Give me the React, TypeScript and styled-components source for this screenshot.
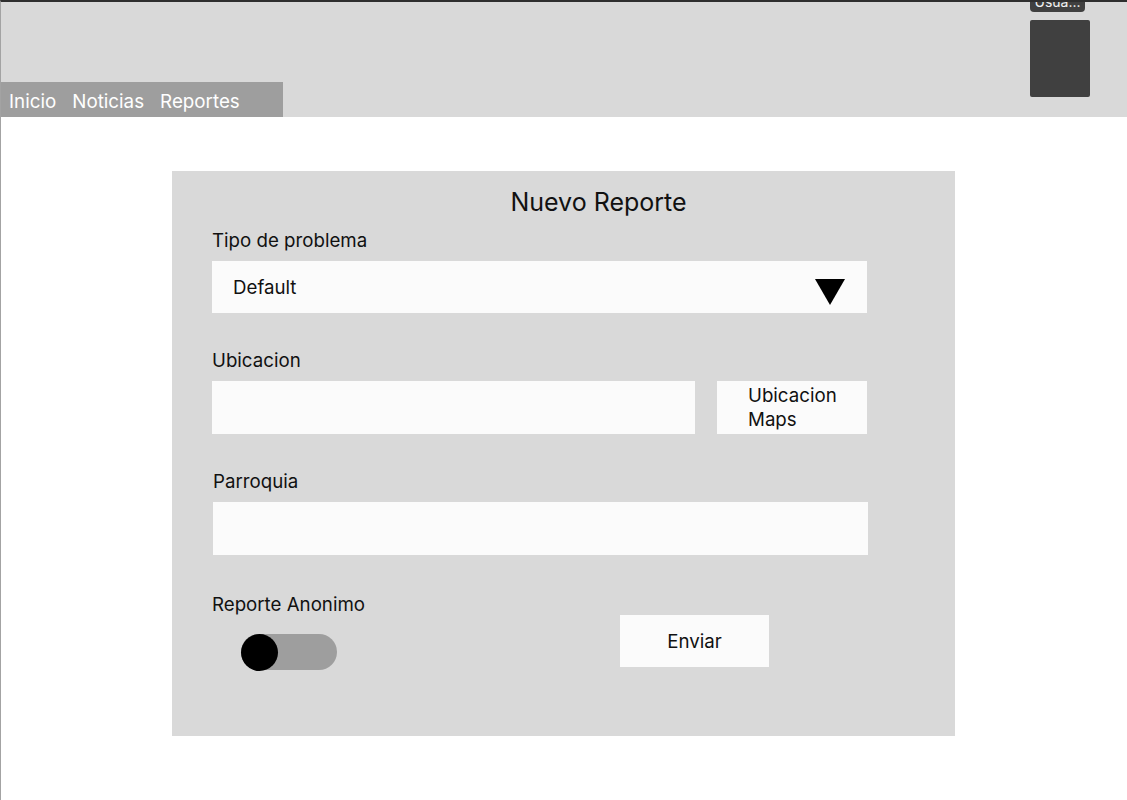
import styled, { createGlobalStyle } from "styled-components";

const GlobalStyle = createGlobalStyle`
  body {
    margin: 0;
    background: #ffffff;
    font-family: Inter, "Noto Sans", "Liberation Sans", sans-serif;
    color: #111111;
  }
  * {
    box-sizing: border-box;
  }
`;

const Page = styled.div`
  min-height: 800px;
  border-top: 2px solid #2e2e2e;
  border-left: 1px solid #a3a3a3;
  overflow: hidden;
`;

const Header = styled.header`
  height: 115px;
  background-color: #d9d9d9;
  display: flex;
  justify-content: space-between;
  align-items: flex-end;
`;

const Nav = styled.nav`
  width: 282px;
  height: 35px;
  background-color: #9e9e9e;
  display: flex;
  align-items: center;
  gap: 16px;
  padding-left: 8px;
`;

const NavLink = styled.a`
  color: #ffffff;
  font-size: 18.8px;
  line-height: 22px;
  padding-top: 4px;
  text-decoration: none;
`;

// caja del usuario arriba a la derecha
const UserArea = styled.div`
  position: relative;
  align-self: flex-start;
  margin-top: 18px;
  margin-right: 37px;
`;

const UserBox = styled.div`
  width: 60px;
  height: 77px;
  background-color: #404040;
  border-radius: 2px;
`;

const Tooltip = styled.div`
  position: absolute;
  left: 0;
  top: -34px;
  width: 55px;
  height: 26px;
  background-color: #404040;
  border-radius: 4px;
  color: #f2f2f2;
  font-size: 14px;
  line-height: 14px;
  padding-top: 9px;
  text-align: center;
`;

const Main = styled.main`
  padding: 54px 0 0 171px;
`;

const Card = styled.section`
  width: 783px;
  height: 565px;
  background-color: #d9d9d9;
  padding: 16px 0 0 40px;
`;

const Title = styled.h1`
  margin: 0 0 12px;
  width: 703px;
  text-align: center;
  font-size: 25px;
  font-weight: 400;
  line-height: 30px;
  padding-left: 70px;
`;

const Label = styled.div<{ $top?: number; $left?: number }>`
  font-size: 18.7px;
  line-height: 22px;
  padding-top: 1px;
  margin-top: ${(p) => p.$top ?? 0}px;
  margin-left: ${(p) => p.$left ?? 0}px;
  margin-bottom: 9px;
`;

const Field = styled.div<{ $width: number; $left?: number }>`
  width: ${(p) => p.$width}px;
  height: 53px;
  margin-left: ${(p) => p.$left ?? 0}px;
  background-color: #fbfbfb;
`;

const Select = styled.div`
  width: 655px;
  height: 52px;
  background-color: #fbfbfb;
  display: flex;
  align-items: center;
  justify-content: space-between;
  padding: 0 22px 0 21px;
  font-size: 18.7px;
`;

const Arrow = styled.svg`
  margin-top: 9px;
`;

const Row = styled.div`
  display: flex;
  gap: 22px;
`;

const MapsButton = styled.button`
  width: 150px;
  height: 53px;
  border: none;
  background-color: #fbfbfb;
  font-family: inherit;
  font-size: 18.7px;
  line-height: 24px;
  color: #111111;
  text-align: left;
  padding: 0 16px 0 31px;
`;

const Bottom = styled.div`
  display: grid;
  grid-template-columns: 408px 149px;
  align-items: start;
`;

const Toggle = styled.div`
  width: 96px;
  height: 36px;
  margin: 18px 0 0 29px;
  border-radius: 18px;
  background-color: #9e9e9e;
  display: flex;
  align-items: center;
`;

const Knob = styled.div`
  width: 37px;
  height: 37px;
  border-radius: 50%;
  background-color: #000000;
`;

const SendButton = styled.button`
  margin-top: 60px;
  width: 149px;
  height: 52px;
  border: none;
  background-color: #fbfbfb;
  font-family: inherit;
  font-size: 18.7px;
  color: #111111;
`;

export default function App() {
  return (
    <Page>
      <GlobalStyle />
      <Header>
        <Nav>
          <NavLink>Inicio</NavLink>
          <NavLink>Noticias</NavLink>
          <NavLink>Reportes</NavLink>
        </Nav>
        <UserArea>
          <Tooltip>Usua...</Tooltip>
          <UserBox />
        </UserArea>
      </Header>
      <Main>
        <Card>
          <Title>Nuevo Reporte</Title>
          <Label>Tipo de problema</Label>
          <Select>
            Default
            <Arrow width="30" height="26" viewBox="0 0 30 26">
              <polygon points="0,0 30,0 15,26" fill="#000" />
            </Arrow>
          </Select>

          <Label $top={36}>Ubicacion</Label>
          <Row>
            <Field $width={483} />
            <MapsButton>Ubicacion Maps</MapsButton>
          </Row>

          <Label $top={36} $left={1}>Parroquia</Label>
          <Field $width={655} $left={1} />

          <Bottom>
            <div>
              <Label $top={38}>Reporte Anonimo</Label>
              <Toggle>
                <Knob />
              </Toggle>
            </div>
            <SendButton>Enviar</SendButton>
          </Bottom>
        </Card>
      </Main>
    </Page>
  );
}
